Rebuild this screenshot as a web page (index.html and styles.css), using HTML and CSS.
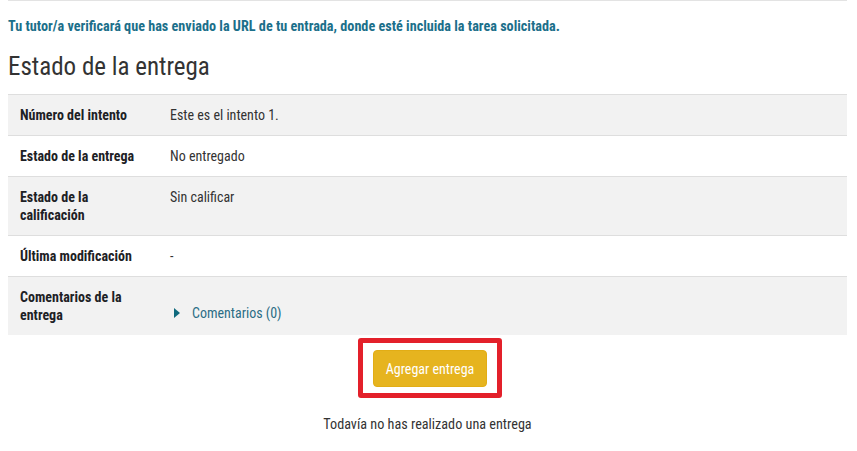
FILE: index.html
```html
<!DOCTYPE html>
<html lang="es">
<head>
<meta charset="utf-8">
<link rel="stylesheet" href="styles.css">
</head>
<body>
<div class="page">
  <p class="intro">Tu tutor/a verificará que has enviado la URL de tu entrada, donde esté incluida la tarea solicitada.</p>
  <h2 class="title">Estado de la entrega</h2>
  <table class="status">
    <colgroup><col class="col-label"><col></colgroup>
    <tr class="odd"><th>Número del intento</th><td>Este es el intento 1.</td></tr>
    <tr><th>Estado de la entrega</th><td>No entregado</td></tr>
    <tr class="odd"><th>Estado de la<br>calificación</th><td>Sin calificar</td></tr>
    <tr><th>Última modificación</th><td>-</td></tr>
    <tr class="odd"><th>Comentarios de la<br>entrega</th><td class="comments"><a class="comment-link" href="#"><svg class="caret" width="6" height="10" viewBox="0 0 6 10"><path d="M0 0 L6 5 L0 10 Z" fill="#0f6a7d"/></svg><span>Comentarios (0)</span></a></td></tr>
  </table>
  <div class="actions">
    <div class="highlight"><button class="btn">Agregar entrega</button></div>
  </div>
  <p class="note">Todavía no has realizado una entrega</p>
</div>
</body>
</html>
```
FILE: styles.css
```css
html, body { margin: 0; padding: 0; background: #fff; }
body {
  font-family: "Roboto Condensed", Roboto, "Liberation Sans", sans-serif;
  font-stretch: condensed;
  font-size: 14px;
  color: #333;
}
.page {
  margin: 0 10px 0 8px;
  border-top: 1px solid #e3e3e3;
}
.intro {
  margin: 17px 0 0;
  font-size: 14.2px;
  font-weight: 700;
  color: #1b6f8a;
  line-height: 17px;
}
.title {
  margin: 17px 0 0;
  font-size: 25px;
  font-weight: 400;
  color: #333;
  line-height: 30px;
}
.status {
  width: 100%;
  table-layout: fixed;
  margin-top: 12px;
  border-collapse: collapse;
}
.col-label { width: 150px; }
.status th, .status td {
  border-top: 1px solid #dedede;
  padding: 11px 12px 11px;
  line-height: 18px;
  text-align: left;
  vertical-align: top;
}
.status th {
  font-weight: 700;
  color: #1d2125;
}
.status td { color: #333; }
.status tr.odd { background: #f2f2f2; }
.status td.comments { vertical-align: bottom; padding-bottom: 13px; }
.comment-link {
  display: inline-flex;
  align-items: center;
  gap: 12px;
  margin-left: 4px;
  color: #2b6d85;
  text-decoration: none;
}
.actions {
  display: flex;
  justify-content: center;
  margin-top: 3px;
  padding-left: 5px;
}
.highlight {
  border: 5px solid #e3202a;
  border-radius: 3px;
  padding: 7px 10px 6px;
}
.btn {
  font: inherit;
  font-stretch: condensed;
  color: #fff;
  background: #e6b41f;
  border: 1px solid #e2ad15;
  border-radius: 4px;
  width: 114px;
  height: 37px;
  padding: 0;
}
.note {
  margin: 18px 0 0;
  font-size: 14.2px;
  line-height: 17px;
  text-align: center;
  color: #333;
}
```
